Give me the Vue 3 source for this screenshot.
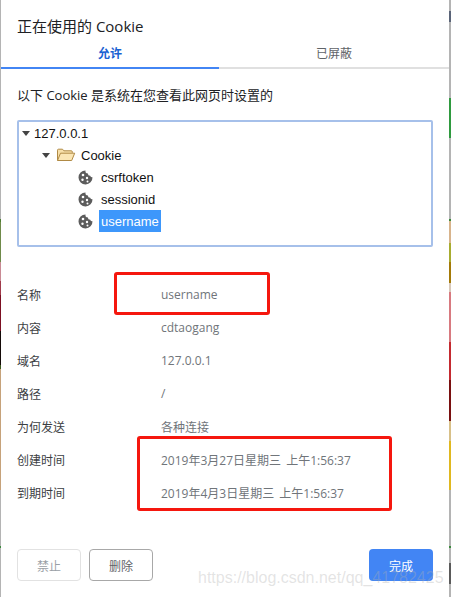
<script setup>
const details = [
  { label: "名称", value: "username" },
  { label: "内容", value: "cdtaogang" },
  { label: "域名", value: "127.0.0.1" },
  { label: "路径", value: "/" },
  { label: "为何发送", value: "各种连接" },
  { label: "创建时间", value: "2019年3月27日星期三 上午1:56:37" },
  { label: "到期时间", value: "2019年4月3日星期三 上午1:56:37" },
]

const cookies = [
  { name: "csrftoken", selected: false },
  { name: "sessionid", selected: false },
  { name: "username", selected: true },
]
</script>

<template>
  <div class="page">
    <div class="strip strip-left"></div>
    <div class="dialog">
      <h1 class="title">正在使用的 Cookie</h1>
      <div class="tabs">
        <div class="tab active">允许</div>
        <div class="tab">已屏蔽</div>
      </div>
      <p class="intro">以下 Cookie 是系统在您查看此网页时设置的</p>

      <div class="tree">
        <div class="node">
          <span class="arrow"></span>
          <span>127.0.0.1</span>
        </div>
        <div class="node level1">
          <span class="arrow"></span>
          <svg class="folder" width="20" height="14" viewBox="0 0 20 14">
            <path d="M1.5 12.5V2.2q0-1 1-1h4l1.4 1.6h7.4q1 0 1 1v1" fill="#f7dfa8" stroke="#b08a45" />
            <path d="M1.5 12.5l3-7.300h14.200l-3 7.300z" fill="#fbe6b4" stroke="#b08a45" stroke-linejoin="round" />
          </svg>
          <span>Cookie</span>
        </div>
        <div class="node level2" v-for="cookie in cookies" :key="cookie.name">
          <svg class="cookie" width="15" height="15" viewBox="0 0 15 15">
            <path d="M7.500.5a2.500 2.500 0 0 0 2.400 2.900 2.300 2.300 0 0 0 2.300 2.400 2.200 2.200 0 0 0 2.300 1.500A7 7 0 1 1 7.500.5z" fill="#5c5c5c" />
            <circle cx="5" cy="5" r="1.300" fill="#fff" />
            <circle cx="4.500" cy="9.800" r="1.200" fill="#fff" />
            <circle cx="9" cy="8" r="1.200" fill="#fff" />
            <circle cx="9.500" cy="11.500" r="1" fill="#fff" />
          </svg>
          <span class="name" :class="{ selected: cookie.selected }">{{ cookie.name }}</span>
        </div>
      </div>

      <div class="details">
        <div class="row" v-for="item in details" :key="item.label">
          <span class="label">{{ item.label }}</span>
          <span class="value">{{ item.value }}</span>
        </div>
      </div>

      <div class="buttons">
        <button class="btn disabled">禁止</button>
        <button class="btn">删除</button>
        <button class="btn primary">完成</button>
      </div>
    </div>
    <div class="strip strip-right"></div>

    <div class="mark mark-name"></div>
    <div class="mark mark-time"></div>
    <div class="watermark">https://blog.csdn.net/qq_41782425</div>
  </div>
</template>

<style scoped>
.page {
  position: relative;
  width: 451px;
  height: 597px;
  overflow: hidden;
  display: flex;
  font-family: "Open Sans", "Noto Sans CJK SC", sans-serif;
}

/* what shows of the page behind the dialog */
.strip {
  flex: none;
  height: 597px;
}

.strip-left {
  width: 1px;
  background: linear-gradient(to bottom,
    #b4b4b4 0 219px, #4e7d32 219px 222px, #6f8a4a 222px 262px, #c98a94 262px 281px,
    #a03a4a 281px 295px, #7c0f22 295px 331px, #140a08 331px 365px, #3d5a20 365px 369px,
    #c6a27a 369px 490px, #b4b4b4 490px 546px, #3a8a3a 546px 548px, #b4b4b4 548px);
}

.strip-right {
  width: 2px;
  background: linear-gradient(to bottom,
    #b4b4b4 0 11px, #5a6478 11px 22px, #b4b4b4 22px 98px, #2f9a3f 98px 138px,
    #b4b4b4 138px 219px, #3a8a3a 219px 221px, #d8b48c 221px 243px, #a8ac30 243px 262px,
    #a47a08 262px 283px, #d8c8b8 283px 292px, #d87a80 292px 342px, #c42a30 342px 380px,
    #7a1010 380px 421px, #d8c088 421px 441px, #e0b820 441px 490px, #b4b4b4 490px 546px,
    #3a8a3a 546px 548px, #b4b4b4 548px 563px, #5a5a5a 563px 584px, #b4b4b4 584px);
}

.dialog {
  flex: none;
  width: 448px;
  height: 597px;
  background: #fff;
  color: #202124;
  display: flex;
  flex-direction: column;
}

.title {
  margin: 0;
  padding: 16px 16px 0;
  height: 40px;
  box-sizing: border-box;
  font-size: 15px;
  line-height: 20px;
  font-weight: 400;
}

.tabs {
  display: flex;
  height: 29px;
  box-sizing: border-box;
  border-bottom: 2px solid #e0e0e0;
}

.tab {
  flex: 1;
  height: 29px;
  box-sizing: border-box;
  text-align: center;
  font-size: 12px;
  line-height: 28px;
  color: #5f6368;
}

.tab.active {
  flex: none;
  width: 218px;
  color: #1a62d2;
  font-weight: 700;
  border-bottom: 2px solid #4285f4;
}

.intro {
  margin: 0;
  padding: 17px 16px 0;
  height: 51px;
  box-sizing: border-box;
  font-size: 13px;
  line-height: 18px;
}

.tree {
  margin: 0 16px;
  height: 127px;
  box-sizing: border-box;
  border: 2px solid #a6c0ea;
  border-radius: 2px;
  padding: 0 0 0 3px;
  font-family: "Liberation Sans", "Noto Sans CJK SC", sans-serif;
  font-size: 13px;
  color: #111;
  display: flex;
  flex-direction: column;
}

.node {
  display: flex;
  align-items: center;
  height: 22px;
  flex: none;
}

.level1 {
  padding-left: 20px;
}

.level2 {
  padding-left: 56px;
}

.arrow {
  width: 0;
  height: 0;
  margin-right: 4px;
  border-left: 4px solid transparent;
  border-right: 4px solid transparent;
  border-top: 5px solid #444;
}

.level1 .arrow {
  margin-right: 6px;
}

.folder {
  margin-right: 5px;
}

.cookie {
  margin-right: 6px;
}

.name {
  padding: 2px 2px 0;
  line-height: 20px;
}

.name.selected {
  background: #3d97fb;
  color: #fff;
}

.details {
  margin-top: 31px;
  font-size: 12px;
}

.row {
  display: grid;
  grid-template-columns: 144px auto;
  height: 33px;
  align-items: center;
  padding-left: 16px;
}

.label {
  color: #3c4043;
}

.value {
  color: #70757a;
  word-spacing: 2px;
}

.buttons {
  display: flex;
  gap: 8px;
  padding: 0 16px;
  margin-top: 40px;
}

.btn {
  width: 64px;
  height: 32px;
  box-sizing: border-box;
  border: 1px solid #a8a8a8;
  border-radius: 4px;
  background: #fff;
  color: #5f6368;
  font-family: inherit;
  font-size: 12px;
  padding: 2px 0 0;
}

.btn.disabled {
  border-color: #e2e2e2;
  color: #9aa0a6;
}

.btn.primary {
  margin-left: auto;
  border: none;
  background: #4285f4;
  color: #fff;
}

.mark {
  position: absolute;
  box-sizing: border-box;
  border: 3px solid #f5170e;
  border-radius: 3px;
}

.mark-name {
  left: 114px;
  top: 272px;
  width: 156px;
  height: 43px;
}

.mark-time {
  left: 137px;
  top: 436px;
  width: 255px;
  height: 75px;
}

.watermark {
  position: absolute;
  left: 198px;
  top: 569px;
  font-family: "Liberation Sans", sans-serif;
  font-size: 16px;
  line-height: 18px;
  color: rgba(175, 175, 175, 0.35);
  white-space: nowrap;
}
</style>
